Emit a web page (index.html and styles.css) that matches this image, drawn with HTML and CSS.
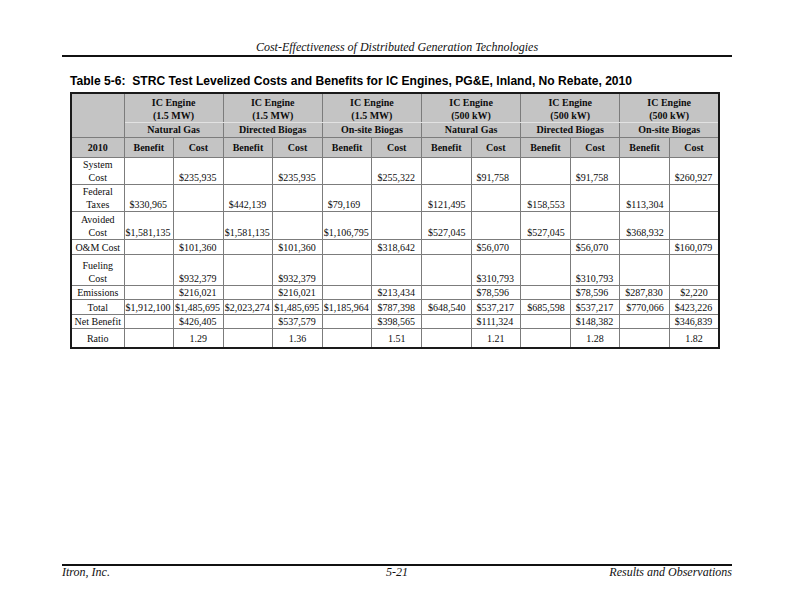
FILE: index.html
```html
<!DOCTYPE html>
<html>
<head>
<meta charset="utf-8">
<link rel="stylesheet" href="styles.css">
</head>
<body>
<div class="page">
  <header class="running-head">Cost-Effectiveness of Distributed Generation Technologies</header>
  <h1 class="caption">Table 5-6:&nbsp; STRC Test Levelized Costs and Benefits for IC Engines, PG&amp;E, Inland, No Rebate, 2010</h1>
  <table class="data">
    <colgroup>
      <col class="c-label">
      <col><col><col><col><col><col><col><col><col><col><col><col>
    </colgroup>
    <thead>
      <tr class="grp-a">
        <th rowspan="2" class="blank"></th>
        <th colspan="2">IC Engine<br>(1.5 MW)</th>
        <th colspan="2">IC Engine<br>(1.5 MW)</th>
        <th colspan="2">IC Engine<br>(1.5 MW)</th>
        <th colspan="2">IC Engine<br>(500 kW)</th>
        <th colspan="2">IC Engine<br>(500 kW)</th>
        <th colspan="2">IC Engine<br>(500 kW)</th>
      </tr>
      <tr class="grp-b">
        <th colspan="2">Natural Gas</th>
        <th colspan="2">Directed Biogas</th>
        <th colspan="2">On-site Biogas</th>
        <th colspan="2">Natural Gas</th>
        <th colspan="2">Directed Biogas</th>
        <th colspan="2">On-site Biogas</th>
      </tr>
      <tr class="sub">
        <th>2010</th>
        <th>Benefit</th><th>Cost</th>
        <th>Benefit</th><th>Cost</th>
        <th>Benefit</th><th>Cost</th>
        <th>Benefit</th><th>Cost</th>
        <th>Benefit</th><th>Cost</th>
        <th>Benefit</th><th>Cost</th>
      </tr>
    </thead>
    <tbody>
      <tr class="r-sys">
        <td class="lbl">System<br>Cost</td>
        <td></td><td>$235,935</td>
        <td></td><td>$235,935</td>
        <td></td><td>$255,322</td>
        <td></td><td>$91,758</td>
        <td></td><td>$91,758</td>
        <td></td><td>$260,927</td>
      </tr>
      <tr class="r-fed">
        <td class="lbl">Federal<br>Taxes</td>
        <td>$330,965</td><td></td>
        <td>$442,139</td><td></td>
        <td>$79,169</td><td></td>
        <td class="m">$121,495</td><td></td>
        <td class="m">$158,553</td><td></td>
        <td class="m">$113,304</td><td></td>
      </tr>
      <tr class="r-avo">
        <td class="lbl">Avoided<br>Cost</td>
        <td class="w">$1,581,135</td><td></td>
        <td class="w">$1,581,135</td><td></td>
        <td class="w">$1,106,795</td><td></td>
        <td class="m">$527,045</td><td></td>
        <td class="m">$527,045</td><td></td>
        <td class="m">$368,932</td><td></td>
      </tr>
      <tr class="r-om">
        <td class="lbl">O&amp;M Cost</td>
        <td></td><td>$101,360</td>
        <td></td><td>$101,360</td>
        <td></td><td>$318,642</td>
        <td></td><td>$56,070</td>
        <td></td><td>$56,070</td>
        <td></td><td>$160,079</td>
      </tr>
      <tr class="r-fuel">
        <td class="lbl">Fueling<br>Cost</td>
        <td></td><td>$932,379</td>
        <td></td><td>$932,379</td>
        <td></td><td></td>
        <td></td><td>$310,793</td>
        <td></td><td>$310,793</td>
        <td></td><td></td>
      </tr>
      <tr class="r-emi">
        <td class="lbl">Emissions</td>
        <td></td><td>$216,021</td>
        <td></td><td>$216,021</td>
        <td></td><td>$213,434</td>
        <td></td><td>$78,596</td>
        <td></td><td>$78,596</td>
        <td>$287,830</td><td class="c">$2,220</td>
      </tr>
      <tr class="r-tot">
        <td class="lbl">Total</td>
        <td class="w">$1,912,100</td><td class="w">$1,485,695</td>
        <td class="w">$2,023,274</td><td class="w">$1,485,695</td>
        <td class="w">$1,185,964</td><td>$787,398</td>
        <td class="m">$648,540</td><td>$537,217</td>
        <td class="m">$685,598</td><td>$537,217</td>
        <td class="m">$770,066</td><td>$423,226</td>
      </tr>
      <tr class="r-net">
        <td class="lbl">Net Benefit</td>
        <td></td><td>$426,405</td>
        <td></td><td>$537,579</td>
        <td></td><td>$398,565</td>
        <td></td><td>$111,324</td>
        <td></td><td>$148,382</td>
        <td></td><td>$346,839</td>
      </tr>
      <tr class="r-ratio">
        <td class="lbl">Ratio</td>
        <td></td><td class="c">1.29</td>
        <td></td><td class="c">1.36</td>
        <td></td><td class="c">1.51</td>
        <td></td><td class="c">1.21</td>
        <td></td><td class="c">1.28</td>
        <td></td><td class="c">1.82</td>
      </tr>
    </tbody>
  </table>
  <footer class="running-foot">
    <span class="ft-left">Itron, Inc.</span>
    <span class="ft-mid">5-21</span>
    <span class="ft-right">Results and Observations</span>
  </footer>
</div>
</body>
</html>
```

FILE: styles.css
```css
html, body {
  margin: 0;
  padding: 0;
  background: #ffffff;
}

.page {
  width: 792px;
  height: 612px;
  box-sizing: border-box;
  padding: 40px 60px 0 62px;
  display: flex;
  flex-direction: column;
  font-family: "Liberation Serif", "Times New Roman", serif;
  color: #111;
}

.running-head {
  font-style: italic;
  font-size: 12px;
  line-height: 14px;
  text-align: center;
  padding-bottom: 1px;
  border-bottom: 2px solid #111;
}

.caption {
  margin: 17px 0 0 8px;
  font-family: "Liberation Sans", Arial, sans-serif;
  font-weight: bold;
  font-size: 12.1px;
  line-height: 14px;
  color: #000;
}

.data {
  margin: 4px 0 0 8px;
  width: 650px;
  table-layout: fixed;
  border-collapse: collapse;
  border: 2px solid #1a1a1a;
  font-size: 10px;
  line-height: 13px;
  color: #0d0d0d;
}

.c-label {
  width: 53px;
}

.data th,
.data td {
  border: 1px solid #7c7c7c;
  padding: 0;
  white-space: nowrap;
}

.data thead th {
  background: #c4c4c4;
  font-weight: bold;
  text-align: center;
}

.grp-a th {
  height: 25px;
  padding-top: 2px;
  vertical-align: top;
  border-bottom: 1px solid #e2e2e2;
}

.grp-a th.blank {
  border-bottom: 1px solid #7c7c7c;
}

.grp-b th {
  height: 14px;
  border-top: 1px solid #e2e2e2;
  vertical-align: top;
}

.sub th {
  height: 19px;
  vertical-align: middle;
}

.data td {
  text-align: left;
  padding-left: 5px;
  vertical-align: bottom;
}

.data td.m {
  padding-left: 6px;
}

.data td.w {
  padding-left: 1px;
}

.data td.c {
  text-align: center;
  padding-left: 0;
}

.data td.lbl {
  text-align: center;
  padding-left: 0;
}

.r-sys td { height: 23px; }
.r-fed td { height: 25px; }
.r-avo td { height: 27px; }
.r-om td { height: 14px; }
.r-fuel td { height: 30px; }
.r-emi td { height: 13px; }
.r-tot td { height: 14px; }
.r-net td { height: 13px; }

.r-ratio td {
  height: 18px;
  vertical-align: middle;
}

.running-foot {
  margin-top: auto;
  margin-bottom: 34px;
  border-top: 2px solid #111;
  padding-top: 0;
  display: flex;
  justify-content: space-between;
  font-style: italic;
  font-size: 12px;
  line-height: 12px;
}

.ft-left,
.ft-right {
  flex: 1;
}

.ft-right {
  text-align: right;
}

.ft-mid {
  flex: 0 0 auto;
}
```
